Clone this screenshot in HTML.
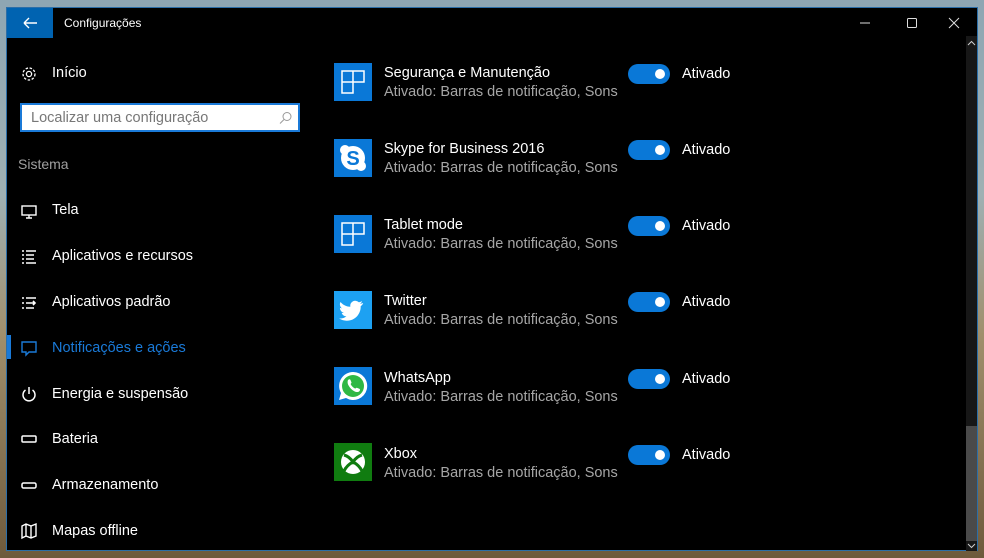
<!DOCTYPE html>
<html><head><meta charset="utf-8"><style>
*{margin:0;padding:0;box-sizing:border-box}
body{width:984px;height:558px;overflow:hidden;position:relative;font-family:"Segoe UI","Liberation Sans","DejaVu Sans",sans-serif;
background:linear-gradient(180deg,#8ea6b3 0%,#9fb0b3 35%,#a08f6c 60%,#6e5a3c 100%);}
.win{position:absolute;left:6px;top:7px;width:972px;height:544px;background:#000;border:1px solid #2b6ea8;}
.back{position:absolute;left:0;top:0;width:46px;height:30px;background:#0063b1;}
.title{position:absolute;left:57px;top:8px;color:#fff;font-size:12px}
.ctl{position:absolute;top:0;color:#ddd;font-size:13px}
.nav{position:absolute;left:45px;color:#fff;font-size:14.5px}
.ni{position:absolute;left:13px;width:18px;height:18px}
.search{position:absolute;left:13px;top:95px;width:280px;height:29px;border:2px solid #1a7ad8;background:#fff;}
.search span{position:absolute;left:9px;top:5px;color:#777;font-size:14.5px}
.icon{position:absolute;left:327px;width:38px;height:38px}
.t1{position:absolute;left:377px;color:#fff;font-size:14.5px}
.t2{position:absolute;left:377px;color:#a6a6a6;font-size:14.5px}
.tog{position:absolute;left:621px;width:42px;height:20px;border-radius:10px;background:#0a78d7}
.tog::after{content:"";position:absolute;right:5px;top:5px;width:10px;height:10px;border-radius:5px;background:#fff}
.on{position:absolute;left:675px;color:#fff;font-size:14.5px}
.sb{position:absolute;left:959px;top:28px;width:11px;height:515px;background:#171717}
.th{position:absolute;left:959px;top:418px;width:11px;height:115px;background:#4a4a4a}
</style></head><body>
<div class="win">
<div class="back"><svg width="46" height="30"><path d="M17 15h13M17 15l5-5M17 15l5 5" stroke="#fff" stroke-width="1.4" fill="none"/></svg></div>
<div class="title">Configurações</div>
<svg class="ctl" style="left:850px" width="16" height="30"><path d="M3 15h10" stroke="#ddd"/></svg>
<svg class="ctl" style="left:897px" width="16" height="30"><rect x="3.5" y="10.5" width="9" height="9" fill="none" stroke="#ddd" rx="1"/></svg>
<svg class="ctl" style="left:939px" width="16" height="30"><path d="M3 10l10 10M13 10L3 20" stroke="#ddd"/></svg>
<svg class="ni" style="top:57px" viewBox="0 0 18 18"><circle cx="9" cy="9" r="2.6" fill="none" stroke="#fff" stroke-width="1.3"/><circle cx="9" cy="9" r="6" fill="none" stroke="#fff" stroke-width="1.3" stroke-dasharray="2.5 1.6"/></svg>
<div class="nav" style="top:57px">Início</div>
<div class="search"><span>Localizar uma configuração</span><svg style="position:absolute;right:5px;top:6px" width="14" height="14"><circle cx="8" cy="5.5" r="4" fill="none" stroke="#999"/><path d="M5 8.5L1 12.5" stroke="#999"/></svg></div>
<div style="position:absolute;left:11px;top:148px;color:#a0a0a0;font-size:14px">Sistema</div>
<svg class="ni" style="top:194px" viewBox="0 0 18 18"><rect x="2" y="4" width="14" height="9" fill="none" stroke="#fff" stroke-width="1.4"/><path d="M9 13v3M6 16h6" stroke="#fff" stroke-width="1.4"/></svg>
<div class="nav" style="top:194px">Tela</div>
<svg class="ni" style="top:240px" viewBox="0 0 18 18"><path d="M2 3h2M2 7h2M2 11h2M2 15h2M6 3h10M6 7h8M6 11h8M6 15h10" stroke="#fff" stroke-width="1.6"/></svg>
<div class="nav" style="top:240px">Aplicativos e recursos</div>
<svg class="ni" style="top:286px" viewBox="0 0 18 18"><path d="M2 4h2M2 9h2M2 14h2M6 4h10M6 9h8M6 14h8M13 7l2 2-2 2" stroke="#fff" stroke-width="1.6" fill="none"/></svg>
<div class="nav" style="top:286px">Aplicativos padrão</div>
<div style="position:absolute;left:0;top:327px;width:4px;height:24px;background:#1a7ad8"></div>
<svg class="ni" style="top:331px" viewBox="0 0 18 18"><path d="M2 3h14v10H9l-3 3v-3H2z" fill="none" stroke="#1a7ad8" stroke-width="1.4"/></svg>
<div class="nav" style="top:332px;color:#1a7ad8">Notificações e ações</div>
<svg class="ni" style="top:377px" viewBox="0 0 18 18"><path d="M5.5 5a6 6 0 1 0 7 0" fill="none" stroke="#fff" stroke-width="1.5"/><path d="M9 2v7" stroke="#fff" stroke-width="1.5"/></svg>
<div class="nav" style="top:378px">Energia e suspensão</div>
<svg class="ni" style="top:422px" viewBox="0 0 18 18"><rect x="2" y="6" width="14" height="6" rx="1" fill="none" stroke="#fff" stroke-width="1.5"/></svg>
<div class="nav" style="top:423px">Bateria</div>
<svg class="ni" style="top:468px" viewBox="0 0 18 18"><rect x="2" y="7" width="14" height="5" rx="1.5" fill="none" stroke="#fff" stroke-width="1.5"/></svg>
<div class="nav" style="top:469px">Armazenamento</div>
<svg class="ni" style="top:514px" viewBox="0 0 18 18"><path d="M2 4l4-2 5 2 5-2v12l-5 2-5-2-4 2z M6 2v12M11 4v12" fill="none" stroke="#fff" stroke-width="1.4"/></svg>
<div class="nav" style="top:515px">Mapas offline</div>

<svg class="icon" style="top:55px" viewBox="0 0 38 38"><rect width="38" height="38" fill="#0a78d7"/><path d="M8 8h22v11H19v11H8zM8 19h11M19 8v11" fill="none" stroke="#fff" stroke-width="1.5"/></svg>
<div class="t1" style="top:57px">Segurança e Manutenção</div><div class="t2" style="top:76px">Ativado: Barras de notificação, Sons</div>
<div class="tog" style="top:56px"></div><div class="on" style="top:58px">Ativado</div>

<svg class="icon" style="top:131px" viewBox="0 0 38 38"><rect width="38" height="38" fill="#0a78d7"/><circle cx="19" cy="19" r="12" fill="#fff"/><circle cx="11" cy="11" r="5" fill="#fff"/><circle cx="27" cy="27" r="5" fill="#fff"/><text x="19" y="26" font-size="20" font-weight="bold" text-anchor="middle" fill="#0a78d7" font-family="Liberation Sans">S</text></svg>
<div class="t1" style="top:133px">Skype for Business 2016</div><div class="t2" style="top:152px">Ativado: Barras de notificação, Sons</div>
<div class="tog" style="top:132px"></div><div class="on" style="top:134px">Ativado</div>

<svg class="icon" style="top:207px" viewBox="0 0 38 38"><rect width="38" height="38" fill="#0a78d7"/><path d="M8 8h22v11H19v11H8zM8 19h11M19 8v11" fill="none" stroke="#fff" stroke-width="1.5"/></svg>
<div class="t1" style="top:209px">Tablet mode</div><div class="t2" style="top:228px">Ativado: Barras de notificação, Sons</div>
<div class="tog" style="top:208px"></div><div class="on" style="top:210px">Ativado</div>

<svg class="icon" style="top:283px" viewBox="0 0 38 38"><rect width="38" height="38" fill="#1da1f2"/><path d="M29 12c-1 .5-2 .7-3 .8 1-.6 1.8-1.6 2-2.7-1 .6-2 1-3.2 1.2a5 5 0 0 0-8.5 4.5C12 15.600 8.500 13.500 6.500 11c-1.3 2.300-.4 5 1.600 6.400-.8 0-1.600-.3-2.200-.6 0 2.500 1.700 4.500 4 5-.7.2-1.500.2-2.200.1.600 2 2.500 3.400 4.700 3.500-2 1.600-4.600 2.400-7.300 2.100 2.200 1.400 4.800 2.200 7.600 2.200 9.100 0 14-7.500 14-14v-.6c1-.7 1.800-1.600 2.400-2.500z" fill="#fff"/></svg>
<div class="t1" style="top:285px">Twitter</div><div class="t2" style="top:304px">Ativado: Barras de notificação, Sons</div>
<div class="tog" style="top:284px"></div><div class="on" style="top:286px">Ativado</div>

<svg class="icon" style="top:359px" viewBox="0 0 38 38"><rect width="38" height="38" fill="#0a78d7"/><path d="M19 5a14 14 0 0 0-12 21l-2 7 7-2A14 14 0 1 0 19 5z" fill="#fff"/><circle cx="19" cy="19" r="11" fill="#2fb844"/><path d="M14 13c1-1 2-1 2.500 0l1 2.500c0 .8-1 1.300-.8 1.800 1 2 2.500 3.400 4.300 4.200.5.200 1-.8 1.800-.8l2.500 1c1 .5 1 1.500 0 2.500-1 1-3 1.200-5 0-2.500-1.300-4.500-3.300-5.800-5.800-1.200-2-1-4.200-.5-5.400z" fill="#fff"/></svg>
<div class="t1" style="top:362px">WhatsApp</div><div class="t2" style="top:381px">Ativado: Barras de notificação, Sons</div>
<div class="tog" style="top:361px"></div><div class="on" style="top:363px">Ativado</div>

<svg class="icon" style="top:435px" viewBox="0 0 38 38"><rect width="38" height="38" fill="#107c10"/><circle cx="19" cy="19" r="12" fill="#fff"/><path d="M10 12c4 1 7 4 9 7 2-3 5-6 9-7M10 28c2-4 5-7 9-9 4 2 7 5 9 9" fill="none" stroke="#107c10" stroke-width="3"/></svg>
<div class="t1" style="top:438px">Xbox</div><div class="t2" style="top:457px">Ativado: Barras de notificação, Sons</div>
<div class="tog" style="top:437px"></div><div class="on" style="top:439px">Ativado</div>

<div class="sb"></div><div class="th"></div>
<svg style="position:absolute;left:959px;top:30px" width="11" height="10"><path d="M2 7l3.5-3.5L9 7" stroke="#ccc" fill="none"/></svg>
<svg style="position:absolute;left:959px;top:533px" width="11" height="10"><path d="M2 3l3.5 3.5L9 3" stroke="#ccc" fill="none"/></svg>
</div>
</body></html>
